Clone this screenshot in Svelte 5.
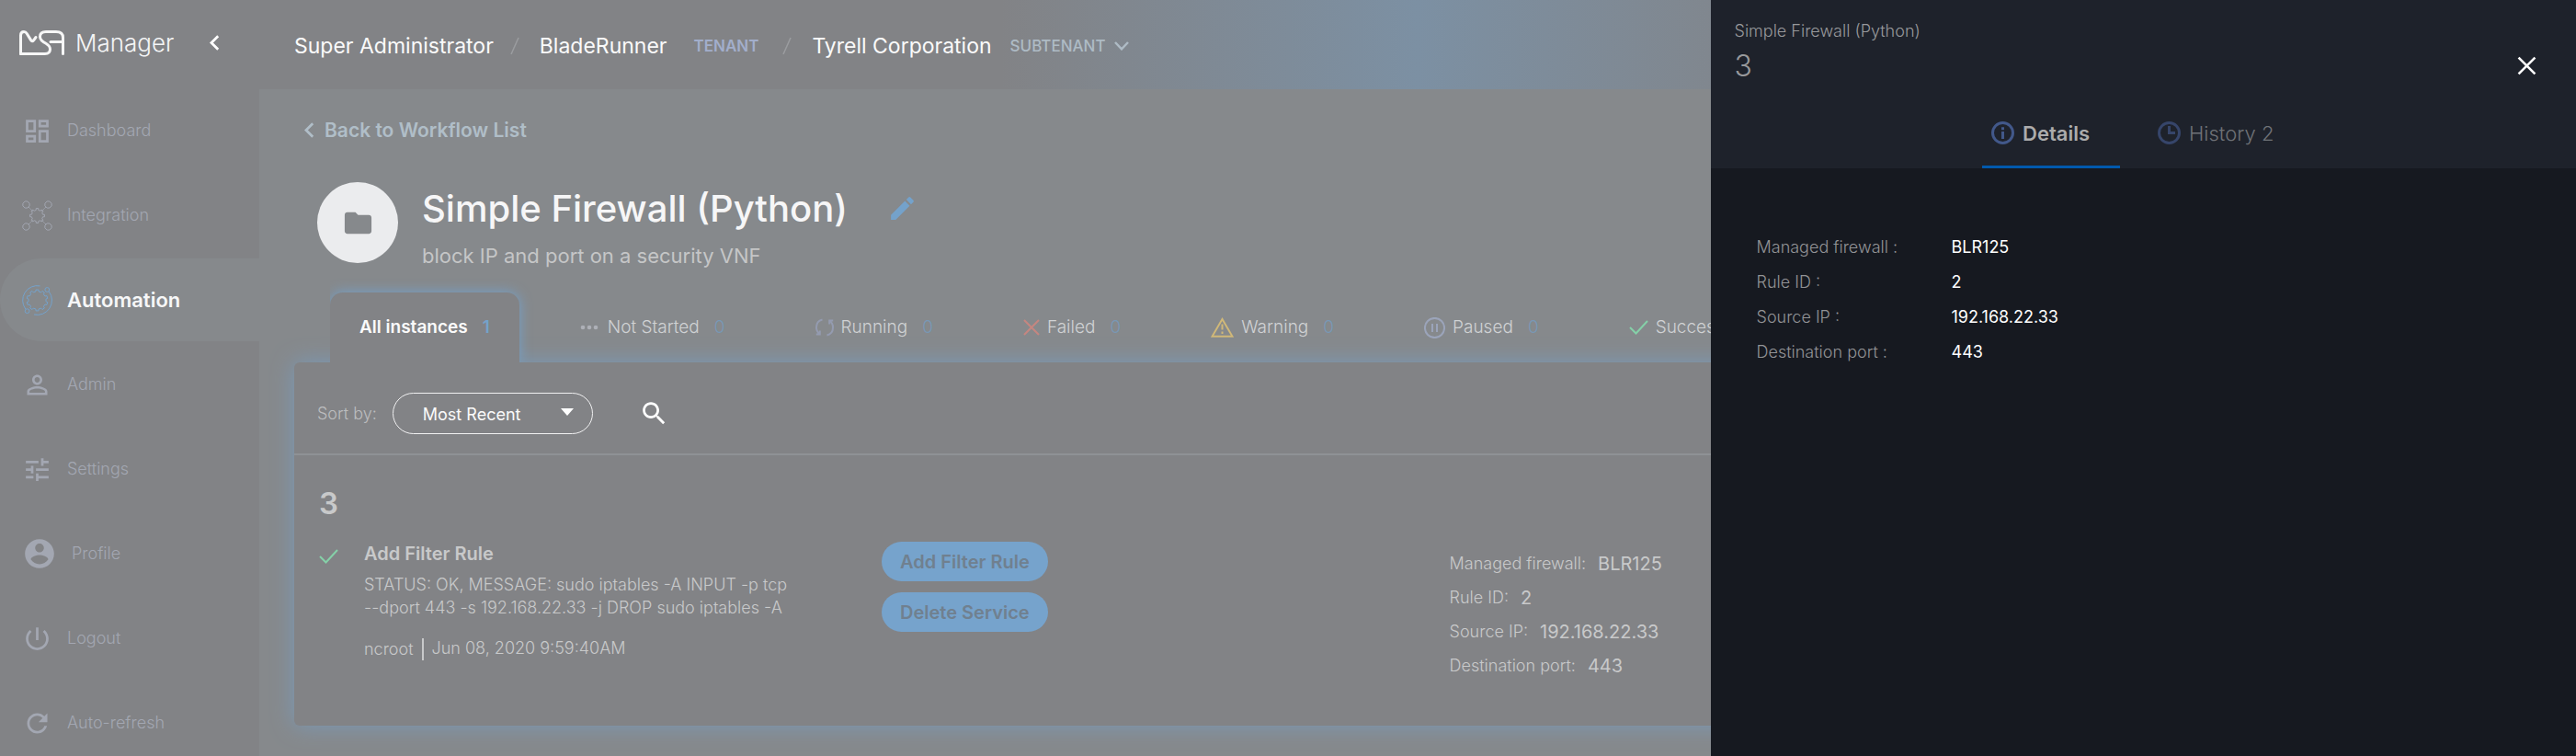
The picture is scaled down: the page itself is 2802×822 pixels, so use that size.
<script>
  // Outline of a toothed wheel centred on (cx, cy).
  function gear(cx, cy, outer, inner, teeth) {
    const points = [];
    const step = (Math.PI * 2) / teeth;
    for (let i = 0; i < teeth; i++) {
      const a = i * step - Math.PI / 2;
      for (const [r, t] of [[inner, -0.27], [outer, -0.2], [outer, 0.2], [inner, 0.27]]) {
        points.push(`${(cx + r * Math.cos(a + t * step)).toFixed(2)} ${(cy + r * Math.sin(a + t * step)).toFixed(2)}`);
      }
    }
    return `M${points.join('L')}Z`;
  }

  const nav = [
    { label: 'Dashboard', path: 'M19 5v2h-4V5h4M9 5v6H5V5h4m10 8v6h-4v-6h4M9 17v2H5v-2h4M21 3h-8v6h8V3zM11 3H3v10h8V3zm10 8h-8v10h8V11zm-10 4H3v6h8v-6z' },
    { label: 'Integration', kind: 'integration' },
    { label: 'Automation', kind: 'automation', active: true },
    { label: 'Admin', path: 'M12 5.9c1.16 0 2.1.94 2.1 2.1s-.94 2.1-2.1 2.1S9.9 9.16 9.9 8s.94-2.1 2.1-2.1m0 9c2.97 0 6.1 1.46 6.1 2.1v1.1H5.9V17c0-.64 3.13-2.1 6.1-2.1M12 4C9.79 4 8 5.79 8 8s1.79 4 4 4 4-1.79 4-4-1.79-4-4-4zm0 9c-2.67 0-8 1.34-8 4v3h16v-3c0-2.66-5.33-4-8-4z' },
    { label: 'Settings', path: 'M3 17v2h6v-2H3zM3 5v2h10V5H3zm10 16v-2h8v-2h-8v-2h-2v6h2zM7 9v2H3v2h4v2h2V9H7zm14 4v-2H11v2h10zm-6-4h2V7h4V5h-4V3h-2v6z' },
    { label: 'Profile', large: true, path: 'M12 2C6.48 2 2 6.48 2 12s4.48 10 10 10 10-4.48 10-10S17.52 2 12 2zm0 3c1.66 0 3 1.34 3 3s-1.34 3-3 3-3-1.34-3-3 1.34-3 3-3zm0 14.2c-2.5 0-4.71-1.28-6-3.22.03-1.99 4-3.08 6-3.08 1.99 0 5.97 1.09 6 3.08-1.29 1.94-3.5 3.22-6 3.22z' },
    { label: 'Logout', path: 'M13 3h-2v10h2V3zm4.83 2.17l-1.42 1.42C17.99 7.86 19 9.81 19 12c0 3.87-3.13 7-7 7s-7-3.13-7-7c0-2.19 1.01-4.14 2.58-5.42L6.17 5.17C4.23 6.82 3 9.26 3 12c0 4.97 4.03 9 9 9s9-4.03 9-9c0-2.74-1.23-5.18-3.17-6.83z' },
    { label: 'Auto-refresh', path: 'M17.65 6.35C16.2 4.9 14.21 4 12 4c-4.42 0-7.99 3.58-7.99 8s3.57 8 7.99 8c3.73 0 6.84-2.55 7.73-6h-2.08c-.82 2.33-3.04 4-5.65 4-3.31 0-6-2.69-6-6s2.69-6 6-6c1.66 0 3.14.69 4.22 1.78L13 11h7V4l-2.35 2.35z' }
  ];

  const tabs = [
    { label: 'All instances', count: 1, active: true },
    { label: 'Not Started', count: 0, icon: 'dots' },
    { label: 'Running', count: 0, icon: 'running' },
    { label: 'Failed', count: 0, icon: 'failed' },
    { label: 'Warning', count: 0, icon: 'warning' },
    { label: 'Paused', count: 0, icon: 'paused' },
    { label: 'Success', count: 0, icon: 'success' }
  ];

  const fields = [
    ['Managed firewall', 'BLR125'],
    ['Rule ID', '2'],
    ['Source IP', '192.168.22.33'],
    ['Destination port', '443']
  ];

  const chevronLeft = 'M15.41 7.41L14 6l-6 6 6 6 1.41-1.41L10.83 12z';
</script>

<div class="app">
  <aside class="sidebar">
    <div class="brand">
      <svg class="logo" viewBox="0 0 49 27" aria-hidden="true">
        <path d="M1.5 25.5V5.5Q1.5 1.5 5 1.5Q7 1.5 8.2 3.5L12.6 10.6Q14 12.8 15.6 10.8L18 7.5" />
        <path d="M1.5 25.5H28Q33.5 25.5 33.5 20.5Q33.5 17 29 14.3Q22.5 10.8 22.5 7Q22.5 1.5 29 1.5H40Q47.5 1.5 47.5 8V25.5" />
        <path d="M34 12.5H47.5" />
      </svg>
      <span class="brand-name">Manager</span>
      <button class="bare collapse" aria-label="Collapse menu">
        <svg class="icon" viewBox="0 0 24 24"><path d={chevronLeft} /></svg>
      </button>
    </div>
    <nav>
      {#each nav as item}
        <a href="#{item.label}" class="nav-item" class:active={item.active}>
          {#if item.kind === 'integration'}
            <svg class="icon line" viewBox="0 0 33 33">
              <path d={gear(16.5, 16.5, 8, 6.2, 8)} />
              {#each [[4.5, 4.5], [28.5, 4.5], [4.5, 28.5], [28.5, 28.5]] as [x, y]}
                <path d="M{x - 1.3} {y - 3.6}h2.6l2.3 2.3v2.6l-2.3 2.3h-2.6l-2.3-2.3v-2.6z" />
              {/each}
              <path stroke-dasharray="2 1" d="M7.2 7.2L12 12M25.8 7.2L21 12M7.2 25.8L12 21M25.8 25.8L21 21" />
            </svg>
          {:else if item.kind === 'automation'}
            <svg class="icon line" viewBox="0 0 33 33">
              <path d={gear(16.5, 16.5, 11.5, 9.6, 10)} />
              <path d="M19.5 .9A15.9 15.9 0 0 0 3.8 26M29.3 7A15.9 15.9 0 0 1 13 32" />
              <circle cx="27.3" cy="5" r="2.4" />
              <circle cx="5.6" cy="28.2" r="2.4" />
            </svg>
          {:else}
            <svg class="icon" class:large={item.large} viewBox="0 0 24 24"><path d={item.path} /></svg>
          {/if}
          <span>{item.label}</span>
        </a>
      {/each}
    </nav>
  </aside>

  <div class="page">
    <header class="topbar">
      <span>Super Administrator</span>
      <svg class="slash" viewBox="0 0 10 20"><path d="M9 1L1 19" /></svg>
      <span>BladeRunner</span>
      <small class="tenant">TENANT</small>
      <svg class="slash wide" viewBox="0 0 10 20"><path d="M9 1L1 19" /></svg>
      <span>Tyrell Corporation</span>
      <button class="bare subtenant">
        SUBTENANT
        <svg viewBox="0 0 16 10"><path d="M1 1L8 8.3L15 1" /></svg>
      </button>
    </header>

    <main>
      <a class="back" href="#workflows">
        <svg class="icon" viewBox="0 0 24 24"><path d={chevronLeft} /></svg>
        <span>Back to Workflow List</span>
      </a>

      <div class="workflow">
        <div class="avatar">
          <svg viewBox="0 0 24 24"><path d="M10 4H4c-1.1 0-1.99.9-1.99 2L2 18c0 1.1.9 2 2 2h16c1.1 0 2-.9 2-2V8c0-1.1-.9-2-2-2h-8l-2-2z" /></svg>
        </div>
        <div class="heading">
          <div class="title-row">
            <h1>Simple Firewall (Python)</h1>
            <button class="bare edit" aria-label="Edit workflow">
              <svg class="icon" viewBox="0 0 24 24"><path d="M3 17.25V21h3.75L17.81 9.94l-3.75-3.75L3 17.25zM20.71 7.04a.996.996 0 0 0 0-1.41l-2.34-2.34a.996.996 0 0 0-1.41 0l-1.83 1.83 3.75 3.75 1.83-1.83z" /></svg>
            </button>
          </div>
          <p>block IP and port on a security VNF</p>
        </div>
      </div>

      <div class="tabs">
        {#each tabs as tab}
          <button class="bare tab" class:active={tab.active}>
            {#if tab.icon === 'dots'}
              <svg class="dots" width="20" height="6" viewBox="0 0 20 6"><circle cx="3" cy="3" r="2.3" /><circle cx="10" cy="3" r="2.3" /><circle cx="17" cy="3" r="2.3" /></svg>
            {:else if tab.icon === 'running'}
              <svg class="running" width="20" height="20" viewBox="0 0 20 20"><path d="M7.5 1.5C3 2.5 1 6 1 10c0 3 1.2 5.4 3.5 7.2M.8 17.6h4v-4M12.5 18.5C17 17.5 19 14 19 10c0-3-1.2-5.4-3.5-7.2M19.2 2.4h-4v4" /></svg>
            {:else if tab.icon === 'failed'}
              <svg class="failed" width="18" height="18" viewBox="0 0 18 18"><path d="M1 1L17 17M17 1L1 17" /></svg>
            {:else if tab.icon === 'warning'}
              <svg class="warning" width="25" height="22" viewBox="0 0 25 22"><path d="M12.5 2L23.5 20.8H1.5ZM12.5 7.5V13.5M12.5 15.5V18" /></svg>
            {:else if tab.icon === 'paused'}
              <svg class="paused" width="23" height="23" viewBox="0 0 23 23"><circle cx="11.5" cy="11.5" r="10.6" /><path d="M9 7V16M14 7V16" /></svg>
            {:else if tab.icon === 'success'}
              <svg class="check" width="21" height="16" viewBox="0 0 21 16"><path d="M1 8L7.5 14.5L20 1" /></svg>
            {/if}
            <span>{tab.label}</span>
            <span class="count">{tab.count}</span>
          </button>
        {/each}
      </div>

      <section class="card">
        <div class="toolbar">
          <label for="sort">Sort by:</label>
          <div class="select">
            <select id="sort"><option>Most Recent</option></select>
            <svg viewBox="0 0 14 8"><path d="M0 0H14L7 8Z" /></svg>
          </div>
          <button class="bare search" aria-label="Search">
            <svg class="icon" viewBox="0 0 24 24"><path d="M15.5 14h-.79l-.28-.27C15.41 12.59 16 11.11 16 9.5 16 5.91 13.09 3 9.5 3S3 5.91 3 9.5 5.91 16 9.5 16c1.61 0 3.09-.59 4.23-1.57l.27.28v.79l5 4.99L20.49 19l-4.99-5zm-6 0C7.01 14 5 11.99 5 9.5S7.01 5 9.5 5 14 7.01 14 9.5 11.99 14 9.5 14z" /></svg>
          </button>
        </div>

        <article>
          <h2>3</h2>
          <div class="instance">
            <svg class="check" width="23" height="16" viewBox="0 0 21 16"><path d="M1 8L7.5 14.5L20 1" /></svg>
            <div class="status">
              <h3>Add Filter Rule</h3>
              <p>STATUS: OK, MESSAGE: sudo iptables -A INPUT -p tcp<br />--dport 443 -s 192.168.22.33 -j DROP sudo iptables -A</p>
              <footer><span>ncroot</span><time>Jun 08, 2020 9:59:40AM</time></footer>
            </div>
            <div class="actions">
              <button>Add Filter Rule</button>
              <button>Delete Service</button>
            </div>
            <dl class="summary">
              {#each fields as [name, value]}
                <div><dt>{name}:</dt><dd>{value}</dd></div>
              {/each}
            </dl>
          </div>
        </article>
      </section>
    </main>
  </div>

  <aside class="drawer">
    <header>
      <div class="drawer-title">
        <div>
          <p>Simple Firewall (Python)</p>
          <h2>3</h2>
        </div>
        <button class="bare close" aria-label="Close">
          <svg viewBox="0 0 20 20"><path d="M1.5 1.5L18.5 18.5M18.5 1.5L1.5 18.5" /></svg>
        </button>
      </div>
      <div class="drawer-tabs">
        <button class="bare active">
          <svg viewBox="0 0 25 25"><circle cx="12.5" cy="12.5" r="11" /><path d="M12.5 6.3V9.2M12.5 11V19" /></svg>
          Details
        </button>
        <button class="bare">
          <svg viewBox="0 0 25 25"><circle cx="12.5" cy="12.5" r="11" /><path d="M12.5 5V12.5H19" /></svg>
          History 2
        </button>
      </div>
    </header>
    <dl>
      {#each fields as [name, value]}
        <dt>{name} :</dt><dd>{value}</dd>
      {/each}
    </dl>
  </aside>
</div>

<style>
  :global(body) { margin: 0; }
  .app {
    position: relative;
    display: flex;
    height: 100vh;
    overflow: hidden;
    background: #86898c;
    color: #f4f5f6;
    font: 400 18px/24px Inter, Roboto, sans-serif;
  }
  .app * { box-sizing: border-box; }
  h1, h2, h3, p, dl, dd { margin: 0; }
  a { color: inherit; text-decoration: none; }
  svg { flex: none; display: block; }
  .icon { width: 33px; height: 33px; fill: currentColor; }
  .icon.large { width: 38px; height: 38px; }
  .icon.line { fill: none; stroke: currentColor; stroke-width: 1; }
  .bare { padding: 0; border: 0; background: none; color: inherit; font: inherit; cursor: pointer; }

  .sidebar { flex: none; width: 282px; background: #828386; }
  .brand { display: flex; align-items: center; height: 97px; padding: 0 32px 4px 21px; }
  .logo { width: 49px; height: 27px; fill: none; stroke: #f6f6f6; stroke-width: 3; stroke-linecap: round; stroke-linejoin: round; }
  .brand-name { margin-left: 12px; font-size: 26px; font-weight: 300; line-height: 32px; }
  .collapse { margin-left: auto; color: #fff; }
  nav { display: flex; flex-direction: column; gap: 2px; }
  .nav-item {
    display: flex;
    flex: none;
    align-items: center;
    gap: 16px;
    height: 90px;
    padding-left: 24px;
    color: #a3a7b2;
    font-weight: 300;
  }
  .nav-item.active { border-radius: 45px 0 0 45px; background: #86898c; color: #74a2cb; font-size: 22px; font-weight: 600; }
  .nav-item.active span { color: #f6f7f8; }

  .page { flex: 1; min-width: 0; }
  .topbar {
    display: flex;
    align-items: center;
    height: 97px;
    padding: 3px 38px 0;
    background: linear-gradient(90deg, #828386 32%, #7c90a3 50%, #828386 68%);
    color: #fafafa;
    font-size: 23px;
    white-space: nowrap;
  }
  .slash { width: 10px; height: 20px; margin: 0 22px 0 18px; fill: none; stroke: #9b9da0; stroke-width: 1.5; }
  .slash.wide { margin-left: 26px; }
  .tenant { margin-left: 29px; color: #a2aecb; font-size: 17px; font-weight: 600; }
  .subtenant { display: flex; align-items: center; gap: 9px; margin-left: 20px; color: #aebbc5; font-size: 17px; font-weight: 500; }
  .subtenant svg { width: 16px; height: 10px; fill: none; stroke: currentColor; stroke-width: 2.5; }

  main { padding: 28px 38px 0; }
  .back { display: flex; align-items: center; width: max-content; color: #b0bec8; font-size: 21px; font-weight: 600; }
  .workflow { display: flex; align-items: flex-start; gap: 26px; padding: 40px 0 28px 25px; }
  .avatar { display: grid; place-items: center; width: 88px; height: 88px; border-radius: 50%; background: #ebecee; }
  .avatar svg { width: 35px; height: 35px; fill: #86898c; }
  .title-row { display: flex; align-items: center; gap: 43px; height: 57px; }
  h1 { color: #f6f6f7; font-size: 40px; font-weight: 500; line-height: 48px; white-space: nowrap; }
  .edit { color: #74a2cb; }
  .heading p { padding-top: 11px; color: #c5c6c7; font-size: 22px; font-weight: 400; line-height: 24px; }

  .tabs { display: flex; gap: 34px; padding-left: 39px; white-space: nowrap; }
  .tab { display: flex; flex: none; align-items: center; height: 76px; padding: 0 32px; color: #d0d2d4; font-size: 19px; font-weight: 300; }
  .tab.active {
    position: relative;
    z-index: 1;
    border-radius: 14px 14px 0 0;
    background: #828386;
    color: #fafafa;
    font-weight: 600;
    box-shadow: 0 0 14px #74a2cb;
    clip-path: inset(-20px -20px 0 0);
  }
  .tab svg { margin-right: 8px; fill: none; stroke-width: 2; }
  .tab .count { margin-left: 16px; color: #7898b6; }
  .tab.active .count { color: #74a2cb; }
  .tab .dots { margin-right: 10px; fill: #adb0b7; }
  .running { stroke: #949bb0; }
  .failed { stroke: #c58680; }
  .warning { stroke: #d0b878; }
  .paused { stroke: #9ba4ba; }
  .check { fill: none; stroke: #85d0a8; stroke-width: 2; }

  .card { min-height: 395px; border-radius: 6px; background: #828386; box-shadow: 0 0 24px #7a9ab8; }
  .toolbar { display: flex; align-items: center; padding: 33px 25px 21px; border-bottom: 2px solid #8f9195; color: #bcbdbf; }
  .toolbar label { font-weight: 300; }
  .select { position: relative; display: flex; align-items: center; margin: 0 50px 0 17px; }
  select {
    width: 218px;
    height: 45px;
    padding: 3px 32px 0;
    border: 1px solid #f0f0f1;
    border-radius: 23px;
    appearance: none;
    background: none;
    color: #fafafa;
    font: inherit;
  }
  .select svg { position: absolute; right: 21px; top: 17px; width: 14px; height: 8px; fill: #fff; pointer-events: none; }
  .search { color: #fff; }
  article { padding: 32px 25px; color: #c8c9ca; }
  article h2 { padding-left: 2px; font-size: 33px; font-weight: 600; line-height: 40px; }
  .instance { display: grid; grid-template-columns: 51px 31fr 34fr 64fr; align-items: start; padding-top: 22px; }
  .instance > .check { margin: 8px 0 0 1px; }
  h3 { font-size: 20px; font-weight: 600; line-height: 26px; }
  .status p { padding-top: 8px; font-weight: 300; line-height: 25px; }
  .status footer { display: flex; padding-top: 21px; font-weight: 300; }
  .status time { margin-left: 9px; padding-left: 9px; border-left: 2px solid #c8c9ca; line-height: 22px; }
  .actions { display: flex; flex-direction: column; align-items: flex-start; gap: 12px; }
  .actions button { height: 43px; padding: 0 20px; border: 0; border-radius: 22px; background: #76a3cc; color: #70808f; font: 600 20px/24px Inter, Roboto, sans-serif; }
  .summary { display: grid; gap: 13px; padding-top: 12px; font-weight: 300; }
  .summary div { display: flex; align-items: center; gap: 13px; }
  .summary dd { font-size: 20px; font-weight: 400; }

  .drawer { position: absolute; z-index: 2; top: 0; right: 0; bottom: 0; width: 33.6%; background: #161920; color: #fff; }
  .drawer header { height: 183px; background: #1e222b; }
  .drawer-title { display: flex; justify-content: space-between; padding: 22px 43px 0 26px; color: #98999c; font-weight: 300; }
  .drawer-title h2 { padding-top: 6px; font-size: 32px; font-weight: 300; line-height: 40px; }
  .close { align-self: flex-end; padding-bottom: 10px; color: #fff; }
  .close svg { width: 21px; height: 21px; fill: none; stroke: currentColor; stroke-width: 2.5; }
  .drawer-tabs { display: flex; justify-content: center; gap: 31px; padding-top: 15px; }
  .drawer-tabs button { display: flex; align-items: center; gap: 9px; height: 76px; padding: 2px 33px 0 10px; border-bottom: 3px solid transparent; color: #6f7277; font-size: 22px; font-weight: 300; }
  .drawer-tabs button.active { border-color: #0059ad; color: #acacac; font-weight: 600; }
  .drawer-tabs svg { width: 25px; height: 25px; fill: none; stroke: #36456a; stroke-width: 3; }
  .drawer-tabs .active svg { stroke: #42588a; }
  .drawer dl { display: grid; grid-template-columns: 212px 1fr; gap: 14px 0; padding: 74px 50px; }
  .drawer dt { color: #929396; font-weight: 300; }
</style>
